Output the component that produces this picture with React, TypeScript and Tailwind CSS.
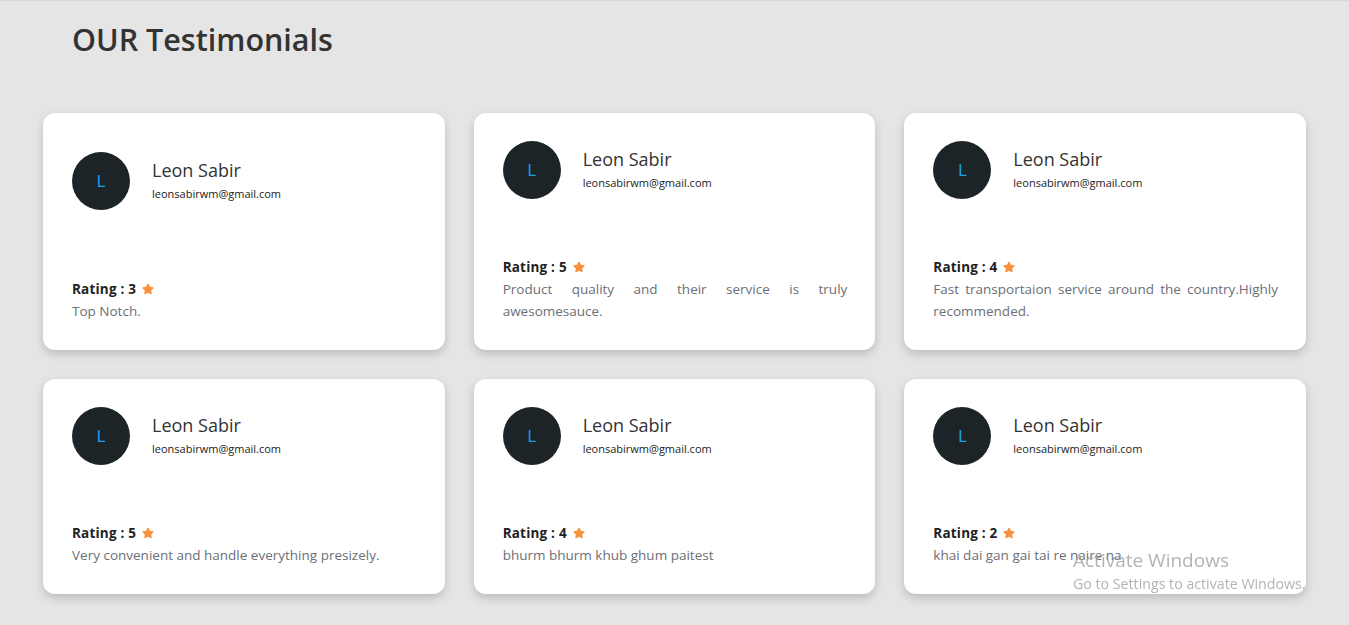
import { FaStar } from 'react-icons/fa';

const reviews = [
  { rating: 3, text: 'Top Notch.', justify: false },
  { rating: 5, text: 'Product quality and their service is truly awesomesauce.', justify: true },
  { rating: 4, text: 'Fast transportaion service around the country.Highly recommended.', justify: true },
  { rating: 5, text: 'Very convenient and handle everything presizely.', justify: false },
  { rating: 4, text: 'bhurm bhurm khub ghum paitest', justify: false },
  { rating: 2, text: 'khai dai gan gai tai re naire na', justify: false },
];

function TestimonialCard({ rating, text, justify }: { rating: number; text: string; justify: boolean }) {
  return (
    <div className="flex flex-col bg-white rounded-xl p-7 shadow-[0_4px_10px_rgba(0,0,0,0.18)]">
      {/* Header */}
      <div className="flex flex-1 items-center gap-[22px] pl-[1px]">
        <div className="flex h-[58px] w-[58px] shrink-0 items-center justify-center rounded-full bg-[#1d2428] text-[17px] text-[#1aa3e8]">
          L
        </div>
        <div className="mb-[4px]">
          <h3 className="text-[18px] leading-7 text-[#333]">Leon Sabir</h3>
          <p className="mt-[2px] text-[11px] leading-4 text-[#222]">leonsabirwm@gmail.com</p>
        </div>
      </div>

      {/* Body */}
      <div className="mt-[57px] pl-[1px]">
        <p className="flex items-center gap-[6px] text-[13.5px] font-bold leading-[22px] text-[#222]">
          <span className="tracking-[0.2px]">Rating : {rating}</span>
          <FaStar className="text-[#f7913d]" size={12} />
        </p>
        <p className={`text-[13.5px] leading-[22px] text-[#6b6f76] ${justify ? 'text-justify' : ''}`}>{text}</p>
      </div>
    </div>
  );
}

export default function App() {
  return (
    <main
      className="relative min-h-[625px] border-t border-[#d6d6d6] bg-[#e5e5e5] px-[43px] pb-8"
      style={{ fontFamily: '"Open Sans", "Noto Sans", sans-serif' }}
    >
      <h1 className="pl-[29px] pt-[18px] text-[30.5px] font-semibold leading-10 text-[#333]">OUR Testimonials</h1>

      <section className="mt-[54px] grid grid-cols-3 gap-[29px]">
        {reviews.map((r, i) => (
          <TestimonialCard key={i} {...r} />
        ))}
      </section>

      {/* Windows watermark */}
      <div className="pointer-events-none fixed left-[1073px] top-[546px] text-[#a0a0a0]/80">
        <p className="text-[19px] leading-7">Activate Windows</p>
        <p className="text-[14.2px] leading-5">Go to Settings to activate Windows.</p>
      </div>
    </main>
  );
}
